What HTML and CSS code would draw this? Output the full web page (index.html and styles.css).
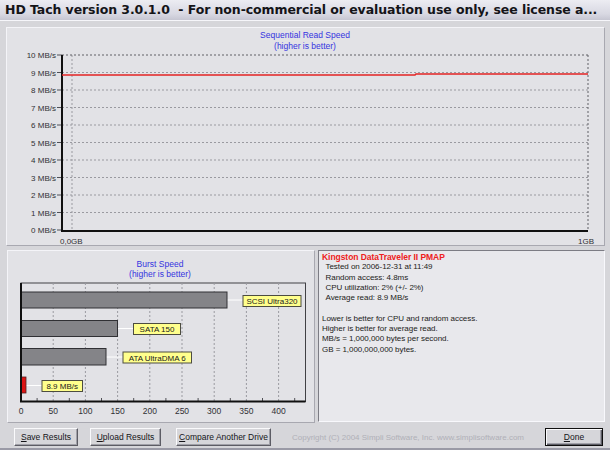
FILE: index.html
```html
<!DOCTYPE html>
<html>
<head>
<meta charset="utf-8">
<link rel="stylesheet" href="styles.css">
</head>
<body>
<div class="window">
  <div class="titlebar">HD Tach version 3.0.1.0  - For non-commercial or evaluation use only, see license a...</div>

  <div class="panel top-panel">
    <svg class="chart" viewBox="7 28 597 217" width="597" height="217">
      <g class="ctitle">
        <text x="305" y="38">Sequential Read Speed</text>
        <text x="305" y="49">(higher is better)</text>
      </g>
      <g class="grid">
        <line x1="62" y1="72.5" x2="588" y2="72.5"/>
        <line x1="62" y1="90" x2="588" y2="90"/>
        <line x1="62" y1="107.5" x2="588" y2="107.5"/>
        <line x1="62" y1="125" x2="588" y2="125"/>
        <line x1="62" y1="142.5" x2="588" y2="142.5"/>
        <line x1="62" y1="160" x2="588" y2="160"/>
        <line x1="62" y1="177.5" x2="588" y2="177.5"/>
        <line x1="62" y1="195" x2="588" y2="195"/>
        <line x1="62" y1="212.5" x2="588" y2="212.5"/>
        <line x1="72" y1="55" x2="72" y2="230"/>
      </g>
      <g class="grid-dark">
        <line x1="62" y1="55" x2="588" y2="55"/>
        <line x1="588" y1="55" x2="588" y2="231"/>
      </g>
      <g class="ticks">
        <line x1="57" y1="55" x2="62" y2="55"/>
        <line x1="57" y1="72.5" x2="62" y2="72.5"/>
        <line x1="57" y1="90" x2="62" y2="90"/>
        <line x1="57" y1="107.5" x2="62" y2="107.5"/>
        <line x1="57" y1="125" x2="62" y2="125"/>
        <line x1="57" y1="142.5" x2="62" y2="142.5"/>
        <line x1="57" y1="160" x2="62" y2="160"/>
        <line x1="57" y1="177.5" x2="62" y2="177.5"/>
        <line x1="57" y1="195" x2="62" y2="195"/>
        <line x1="57" y1="212.5" x2="62" y2="212.5"/>
        <line x1="57" y1="230" x2="62" y2="230"/>
      </g>
      <g class="ylabels">
        <text x="56" y="58">10 MB/s</text>
        <text x="56" y="75.5">9 MB/s</text>
        <text x="56" y="93">8 MB/s</text>
        <text x="56" y="110.5">7 MB/s</text>
        <text x="56" y="128">6 MB/s</text>
        <text x="56" y="145.5">5 MB/s</text>
        <text x="56" y="163">4 MB/s</text>
        <text x="56" y="180.5">3 MB/s</text>
        <text x="56" y="198">2 MB/s</text>
        <text x="56" y="215.5">1 MB/s</text>
        <text x="56" y="233">0 MB/s</text>
      </g>
      <g class="axis">
        <line x1="62" y1="55" x2="62" y2="231"/>
        <line x1="61" y1="231" x2="588" y2="231"/>
      </g>
      <polyline class="redline" points="62,75 415,75 416,74 588,74"/>
      <g class="xlabels">
        <text x="60" y="244">0,0GB</text>
        <text x="578" y="244">1GB</text>
      </g>
    </svg>
  </div>

  <div class="bottom-row">
    <div class="panel burst-panel">
      <svg class="chart" viewBox="8 251 306 171" width="306" height="171">
        <g class="ctitle">
          <text x="160" y="267">Burst Speed</text>
          <text x="160" y="277">(higher is better)</text>
        </g>
        <rect class="plotbox" x="21" y="283" width="284.5" height="118.5"/>
        <g class="grid">
          <line x1="53.2" y1="283" x2="53.2" y2="401"/>
          <line x1="85.4" y1="283" x2="85.4" y2="401"/>
          <line x1="117.6" y1="283" x2="117.6" y2="401"/>
          <line x1="149.8" y1="283" x2="149.8" y2="401"/>
          <line x1="182" y1="283" x2="182" y2="401"/>
          <line x1="214.2" y1="283" x2="214.2" y2="401"/>
          <line x1="246.4" y1="283" x2="246.4" y2="401"/>
          <line x1="278.6" y1="283" x2="278.6" y2="401"/>
        </g>
        <g class="minor">
          <line x1="37.1" y1="398" x2="37.1" y2="401"/>
          <line x1="69.3" y1="398" x2="69.3" y2="401"/>
          <line x1="101.5" y1="398" x2="101.5" y2="401"/>
          <line x1="133.7" y1="398" x2="133.7" y2="401"/>
          <line x1="165.9" y1="398" x2="165.9" y2="401"/>
          <line x1="198.1" y1="398" x2="198.1" y2="401"/>
          <line x1="230.3" y1="398" x2="230.3" y2="401"/>
          <line x1="262.5" y1="398" x2="262.5" y2="401"/>
          <line x1="294.7" y1="398" x2="294.7" y2="401"/>
        </g>
        <g class="connect">
          <line x1="227" y1="300" x2="243" y2="300"/>
          <line x1="117.5" y1="328.5" x2="133.5" y2="328.5"/>
          <line x1="106" y1="357" x2="123" y2="357"/>
          <line x1="26" y1="385.5" x2="42" y2="385.5"/>
        </g>
        <g class="bars">
          <rect x="21" y="292" width="206" height="16"/>
          <rect x="21" y="320.5" width="96.5" height="16"/>
          <rect x="21" y="348.5" width="85" height="16.5"/>
        </g>
        <rect class="bar-red" x="21" y="377" width="5" height="16"/>
        <g class="axis">
          <line x1="21" y1="283" x2="21" y2="402"/>
          <line x1="20" y1="401.5" x2="305.5" y2="401.5"/>
        </g>
        <g class="tags">
          <rect x="243" y="295.5" width="58" height="11"/>
          <rect x="133.5" y="323.5" width="47" height="11"/>
          <rect x="123" y="352" width="68.5" height="11"/>
          <rect x="42" y="380.5" width="40.5" height="11"/>
        </g>
        <g class="tagtext">
          <text x="272" y="304.3">SCSI Ultra320</text>
          <text x="157" y="332.3">SATA 150</text>
          <text x="157.2" y="360.8">ATA UltraDMA 6</text>
          <text x="62.2" y="389.3">8.9 MB/s</text>
        </g>
        <g class="blabels">
          <text x="21" y="414">0</text>
          <text x="53.2" y="414">50</text>
          <text x="85.4" y="414">100</text>
          <text x="117.6" y="414">150</text>
          <text x="149.8" y="414">200</text>
          <text x="182" y="414">250</text>
          <text x="214.2" y="414">300</text>
          <text x="246.4" y="414">350</text>
          <text x="278.6" y="414">400</text>
        </g>
      </svg>
    </div>

    <div class="info-panel">
      <div class="drive">Kingston DataTraveler II PMAP</div>
      <div class="ind">Tested on 2006-12-31 at 11:49</div>
      <div class="ind">Random access: 4.8ms</div>
      <div class="ind">CPU utilization: 2% (+/- 2%)</div>
      <div class="ind">Average read: 8.9 MB/s</div>
      <div class="blank"></div>
      <div>Lower is better for CPU and random access.</div>
      <div>Higher is better for average read.</div>
      <div>MB/s = 1,000,000 bytes per second.</div>
      <div>GB = 1,000,000,000 bytes.</div>
    </div>
  </div>

  <div class="buttons">
    <button class="btn btn-save"><u>S</u>ave Results</button>
    <button class="btn btn-upload"><u>U</u>pload Results</button>
    <button class="btn btn-compare"><u>C</u>ompare Another Drive</button>
    <span class="copyright">Copyright (C) 2004 Simpli Software, Inc. www.simplisoftware.com</span>
    <button class="btn btn-done"><u>D</u>one</button>
  </div>
</div>
</body>
</html>
```

FILE: styles.css
```css
html, body {
  margin: 0;
  padding: 0;
  background: #d6d6da;
}

.window {
  position: relative;
  width: 610px;
  height: 450px;
  box-sizing: border-box;
  background: #d6d6da;
  border-bottom: 2px solid #9a9aa6;
  overflow: hidden;
  font-family: "Liberation Sans", Arial, sans-serif;
}

.titlebar {
  height: 21px;
  box-sizing: border-box;
  padding: 2px 0 0 5px;
  background: linear-gradient(#ececf2, #d8d8e2 70%, #c6c6d2);
  border-bottom: 1px solid #f6f6fa;
  font-family: "DejaVu Sans", Verdana, sans-serif;
  font-weight: bold;
  font-size: 12.5px;
  letter-spacing: -0.08px;
  color: #141418;
  white-space: pre;
  overflow: hidden;
  line-height: 16px;
}

.panel {
  background: #e2e2e6;
  border: 1px solid;
  border-color: #f4f4f8 #a8a8b0 #a8a8b0 #f4f4f8;
}

.top-panel {
  margin: 6px 5px 0 6px;
  height: 219px;
  box-sizing: border-box;
}

.chart {
  display: block;
}

.ctitle text {
  font-family: "Liberation Sans", Arial, sans-serif;
  font-size: 8.5px;
  fill: #3434e0;
  text-anchor: middle;
}

.grid line {
  stroke: #9a9aa0;
  stroke-width: 1;
  stroke-dasharray: 2 2;
}

.grid-dark line {
  stroke: #606066;
  stroke-width: 1;
  stroke-dasharray: 2 2;
}

.ticks line, .minor line {
  stroke: #505056;
  stroke-width: 1;
}

.ylabels text {
  font-size: 8px;
  fill: #303034;
  text-anchor: end;
  font-family: "Liberation Sans", Arial, sans-serif;
}

.xlabels text, .blabels text {
  font-size: 8px;
  fill: #303034;
  font-family: "Liberation Sans", Arial, sans-serif;
}

.blabels text {
  font-size: 8.5px;
  text-anchor: middle;
}

.axis line {
  stroke: #101010;
  stroke-width: 2;
}

.redline {
  fill: none;
  stroke: #e42424;
  stroke-width: 1.6;
}

.bottom-row {
  display: flex;
  gap: 2px;
  margin: 4px 5px 0 7px;
  height: 173px;
}

.burst-panel {
  width: 308px;
  box-sizing: border-box;
}

.plotbox {
  fill: none;
  stroke: #404044;
  stroke-width: 1;
}

.connect line {
  stroke: #ffffff;
  stroke-width: 1;
}

.bars rect {
  fill: #848488;
  stroke: #303034;
  stroke-width: 1;
}

.bar-red {
  fill: #dc1414;
  stroke: #502020;
  stroke-width: 0.8;
}

.tags rect {
  fill: #ffff8c;
  stroke: #4c4c40;
  stroke-width: 1;
}

.tagtext text {
  font-family: "Liberation Sans", Arial, sans-serif;
  font-size: 8px;
  fill: #202020;
  text-anchor: middle;
}

.info-panel {
  flex: 1;
  box-sizing: border-box;
  height: 172px;
  margin-left: 1px;
  background: #e8e8ec;
  border: 1px solid;
  border-color: #7c7c84 #f8f8fc #f8f8fc #7c7c84;
  padding: 1px 0 0 3px;
  font-family: "Liberation Sans", Arial, sans-serif;
  font-size: 8px;
  line-height: 10.3px;
  color: #1c1c20;
  letter-spacing: -0.05px;
}

.info-panel .drive {
  color: #ee2020;
  font-weight: bold;
  font-size: 8.5px;
}

.info-panel .ind {
  padding-left: 3.5px;
}

.info-panel .blank {
  height: 10.3px;
}

.buttons {
  display: flex;
  align-items: center;
  margin-top: 5px;
  padding-left: 14px;
  height: 18px;
}

.btn {
  height: 18px;
  box-sizing: border-box;
  padding: 0;
  margin: 0;
  background: #d6d6da;
  border: 1px solid;
  border-color: #fafafc #5c5c64 #5c5c64 #fafafc;
  box-shadow: inset -1px -1px 0 #a0a0a8;
  font-family: "Liberation Sans", Arial, sans-serif;
  font-size: 8.5px;
  color: #141418;
  line-height: 14px;
}

.btn u {
  text-decoration: underline;
}

.btn-save { width: 64px; }
.btn-upload { width: 71px; margin-left: 12px; }
.btn-compare { width: 95px; margin-left: 15px; }

.copyright {
  width: 274px;
  text-align: center;
  font-size: 8px;
  color: #b0b0b8;
  white-space: nowrap;
}

.btn-done {
  width: 58px;
  border: 1px solid #101010;
  box-shadow: inset 1px 1px 0 #fafafc, inset -1px -1px 0 #5c5c64, inset -2px -2px 0 #a0a0a8;
}
```
